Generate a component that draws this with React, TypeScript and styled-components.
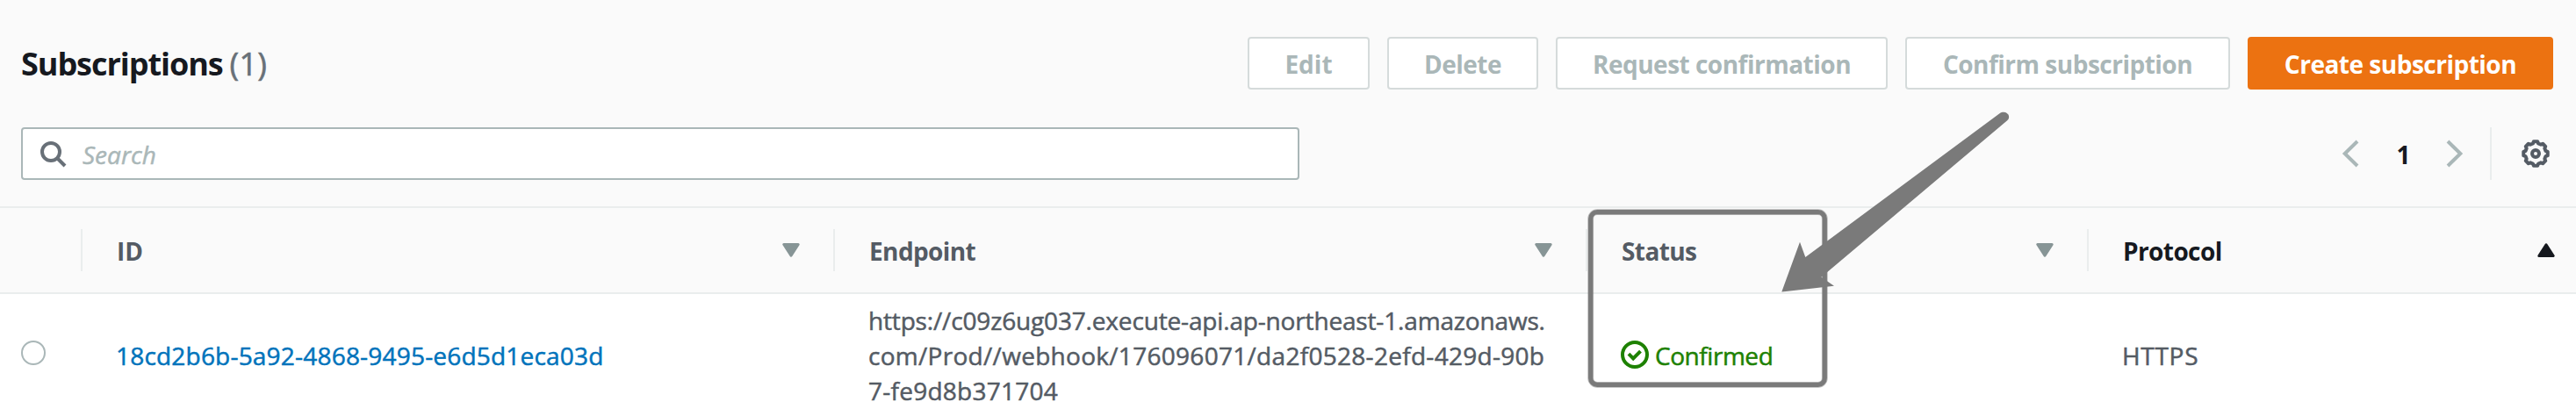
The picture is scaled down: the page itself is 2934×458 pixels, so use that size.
import React from 'react';
import styled, { createGlobalStyle } from 'styled-components';

const color = {
  ink: '#16191f',
  text: '#545b64',
  muted: '#687078',
  disabled: '#aab7b8',
  border: '#d5dbdb',
  line: '#eaeded',
  sort: '#879596',
  link: '#0073bb',
  success: '#1d8102',
  primary: '#ec7211',
  mark: '#7a7a7a',
};

const GlobalStyle = createGlobalStyle`
  *, *::before, *::after { box-sizing: border-box; }
  body {
    margin: 0;
    background: #fff;
    color: ${color.text};
    font-family: 'Open Sans', 'Noto Sans', sans-serif;
    font-size: 28px;
    line-height: 40px;
  }
`;

const Panel = styled.main`
  position: relative;
  width: 2934px;
  height: 458px;
  overflow: hidden;
`;

const Toolbar = styled.header`
  height: 237px;
  padding: 42px 26px 0 24px;
  background: #fafafa;
  border-bottom: 2px solid ${color.line};
`;

const TitleRow = styled.div`
  display: flex;
  align-items: center;
  justify-content: space-between;
  height: 60px;
`;

const Title = styled.h2`
  display: flex;
  gap: 8px;
  margin: 0;
  padding-top: 2px;
  color: ${color.ink};
  font-size: 36px;
  font-weight: 700;
  line-height: 44px;
  letter-spacing: -1.05px;
`;

const Count = styled.span`
  color: ${color.muted};
  font-weight: 400;
  letter-spacing: 0.2px;
  -webkit-text-stroke: 0.6px;
`;

const Actions = styled.div`
  display: flex;
  gap: 20px;
`;

const Button = styled.button<{ $width: number; $primary?: boolean; $tracking?: number }>`
  width: ${(p) => p.$width}px;
  height: 60px;
  padding: 1px 0 0;
  border: 2px solid ${(p) => (p.$primary ? color.primary : color.border)};
  border-radius: 4px;
  background: ${(p) => (p.$primary ? color.primary : '#fff')};
  color: ${(p) => (p.$primary ? '#fff' : color.disabled)};
  font: inherit;
  font-weight: 700;
  letter-spacing: ${(p) => p.$tracking ?? -0.5}px;
  white-space: nowrap;
`;

const FilterRow = styled.div`
  display: flex;
  align-items: center;
  justify-content: space-between;
  height: 60px;
  margin-top: 43px;
`;

const SearchBox = styled.label`
  display: flex;
  align-items: center;
  width: 1456px;
  height: 60px;
  padding-left: 18px;
  border: 2px solid ${color.disabled};
  border-radius: 4px;
  background: #fff;
`;

const SearchInput = styled.input`
  flex: 1;
  height: 40px;
  margin-left: 18px;
  padding: 1px 0 0;
  border: 0;
  outline: 0;
  background: transparent;
  font: inherit;
  &::placeholder {
    color: ${color.disabled};
    font-style: italic;
    opacity: 1;
    -webkit-text-stroke: 0.5px;
  }
`;

const Pager = styled.nav`
  display: flex;
  align-items: center;
  height: 60px;
`;

const PageNumber = styled.span`
  width: 99px;
  padding: 1px 0 0 2px;
  color: ${color.ink};
  font-weight: 700;
  text-align: center;
`;

const Settings = styled.div`
  display: flex;
  align-items: center;
  height: 60px;
  margin-left: 30px;
  padding: 0 4px 0 34px;
  border-left: 2px solid ${color.line};
`;

const Row = styled.div<{ $head?: boolean }>`
  display: grid;
  grid-template-columns: 94px 857px 857px 571px 1fr;
  align-items: center;
  height: ${(p) => (p.$head ? '98px' : '140px')};
  background: ${(p) => (p.$head ? '#fafafa' : '#fff')};
  border-bottom: 2px solid ${(p) => (p.$head ? color.line : '#fff')};
`;

const HeadCell = styled.div<{ $sorted?: boolean; $last?: boolean; $tracking?: number }>`
  display: flex;
  align-items: center;
  justify-content: space-between;
  height: 48px;
  padding: 0 ${(p) => (p.$last ? 24 : 38)}px 0 39px;
  border-right: ${(p) => (p.$last ? 'none' : `2px solid ${color.line}`)};
  color: ${(p) => (p.$sorted ? color.ink : color.text)};
  font-weight: 700;
  letter-spacing: ${(p) => p.$tracking ?? -0.6}px;
`;

const HeadLabel = styled.span`
  padding-top: 1px;
`;

const Cell = styled.div<{ $tracking?: number }>`
  display: flex;
  align-items: center;
  padding: 2px 38px 0;
  letter-spacing: ${(p) => p.$tracking ?? 0}px;
  -webkit-text-stroke: 0.5px;
`;

const SelectCell = styled.div`
  height: 32px;
  padding-left: 24px;
`;

const Radio = styled.div`
  width: 28px;
  height: 28px;
  border: 2px solid ${color.disabled};
  border-radius: 50%;
  background: #fff;
`;

const Link = styled.a`
  color: ${color.link};
  text-decoration: none;
`;

const Address = styled.span`
  display: flex;
  flex-direction: column;
  white-space: nowrap;
`;

const AddressLine = styled.span<{ $tracking: number }>`
  letter-spacing: ${(p) => p.$tracking}px;
`;

const Status = styled.span`
  display: flex;
  align-items: center;
  gap: 7px;
  color: ${color.success};

  svg {
    margin-bottom: 2px;
  }
`;

const Annotation = styled.svg`
  position: absolute;
  top: 0;
  left: 0;
  pointer-events: none;
`;

const SearchIcon = () => (
  <svg width="32" height="32" viewBox="0 0 32 32" fill="none" stroke={color.muted} strokeWidth="4">
    <circle cx="14" cy="14" r="10" />
    <path d="M21 21l9 9" />
  </svg>
);

const Chevron = ({ right }: { right?: boolean }) => (
  <svg width="20" height="32" viewBox="0 0 20 32" fill="none" stroke={color.disabled} strokeWidth="4">
    <path d={right ? 'M2 2l14.3 14L2 30' : 'M18 2L3.7 16 18 30'} />
  </svg>
);

const gearPoints = Array.from({ length: 8 }, (_, i) =>
  [[-15, 11.9], [-9, 13.9], [9, 13.9], [15, 11.9]].map(([offset, r]) => {
    const a = ((i * 45 + offset) * Math.PI) / 180;
    return `${(16 + r * Math.cos(a)).toFixed(2)},${(16 + r * Math.sin(a)).toFixed(2)}`;
  }).join(' '),
).join(' ');

const GearIcon = () => (
  <svg width="32" height="32" viewBox="0 0 32 32" fill="none" stroke={color.text} strokeWidth="4">
    <polygon points={gearPoints} strokeLinejoin="round" />
    <circle cx="16" cy="16" r="4" />
  </svg>
);

const SortIcon = ({ up }: { up?: boolean }) => {
  const fill = up ? color.ink : color.sort;
  return (
    <svg width="20" height="16" viewBox="0 0 20 16" fill={fill} stroke={fill} strokeWidth="3" strokeLinejoin="round">
      <path d={up ? 'M10 1.8L18.2 14.5H1.8z' : 'M10 14.2L1.8 1.5h16.4z'} />
    </svg>
  );
};

const CheckIcon = () => (
  <svg width="32" height="32" viewBox="0 0 32 32" fill="none" stroke={color.success} strokeWidth="4">
    <circle cx="16" cy="16" r="14" />
    <path d="M9 15.2l5.2 5.2 8.3-8.3" />
  </svg>
);

export default function App() {
  return (
    <>
      <GlobalStyle />
      <Panel>
        <Toolbar>
          <TitleRow>
            <Title>
              Subscriptions <Count>(1)</Count>
            </Title>
            <Actions>
              <Button $width={139} $tracking={0}>Edit</Button>
              <Button $width={172}>Delete</Button>
              <Button $width={378}>Request confirmation</Button>
              <Button $width={370}>Confirm subscription</Button>
              <Button $width={348} $primary>Create subscription</Button>
            </Actions>
          </TitleRow>
          <FilterRow>
            <SearchBox>
              <SearchIcon />
              <SearchInput placeholder="Search" />
            </SearchBox>
            <Pager>
              <Chevron />
              <PageNumber>1</PageNumber>
              <Chevron right />
              <Settings>
                <GearIcon />
              </Settings>
            </Pager>
          </FilterRow>
        </Toolbar>

        <Row $head>
          <HeadCell />
          <HeadCell $tracking={0}><HeadLabel>ID</HeadLabel><SortIcon /></HeadCell>
          <HeadCell><HeadLabel>Endpoint</HeadLabel><SortIcon /></HeadCell>
          <HeadCell><HeadLabel>Status</HeadLabel><SortIcon /></HeadCell>
          <HeadCell $sorted $last><HeadLabel>Protocol</HeadLabel><SortIcon up /></HeadCell>
        </Row>

        <Row>
          <SelectCell>
            <Radio />
          </SelectCell>
          <Cell $tracking={0.2}>
            <Link href="#">18cd2b6b-5a92-4868-9495-e6d5d1eca03d</Link>
          </Cell>
          <Cell>
            <Address>
              <AddressLine $tracking={-0.16}>https://c09z6ug037.execute-api.ap-northeast-1.amazonaws.</AddressLine>
              <AddressLine $tracking={0.29}>com/Prod//webhook/176096071/da2f0528-2efd-429d-90b</AddressLine>
              <AddressLine $tracking={0.25}>7-fe9d8b371704</AddressLine>
            </Address>
          </Cell>
          <Cell $tracking={-0.45}>
            <Status>
              <CheckIcon />
              Confirmed
            </Status>
          </Cell>
          <Cell $tracking={0.7}>HTTPS</Cell>
        </Row>

        <Annotation width="2934" height="458" viewBox="0 0 2934 458">
          <rect x="1811.7" y="241.7" width="266.6" height="196.6" rx="7.5" fill="none" stroke={color.mark} strokeOpacity="0.5" strokeWidth="6.8" />
          <rect x="1811.7" y="241.7" width="266.6" height="196.6" rx="7.5" fill="none" stroke={color.mark} strokeWidth="5.2" />
          <path d="M2029.3 332.5L2050 275.7L2056.3 293L2277.5 129.2C2284 124.5 2291.5 131.5 2286.5 137L2074.4 315.8L2089 325.7Z" fill={color.mark} />
        </Annotation>
      </Panel>
    </>
  );
}
